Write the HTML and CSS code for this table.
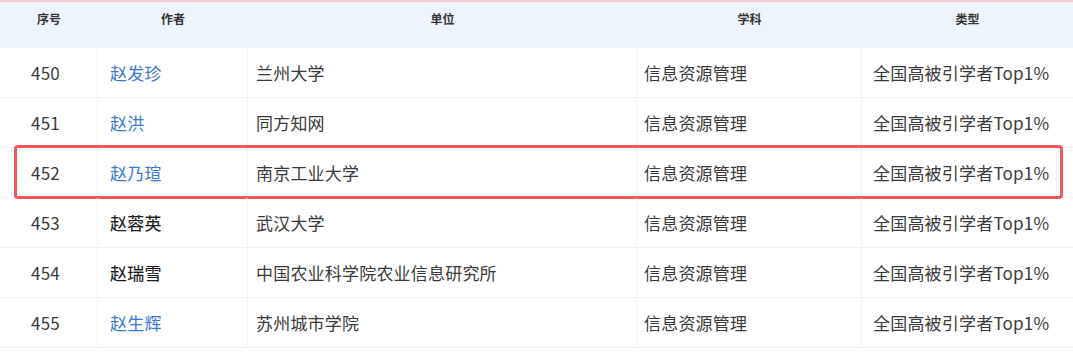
FILE: index.html
```html
<!DOCTYPE html>
<html lang="zh-CN">
<head>
<meta charset="utf-8">
<link rel="stylesheet" href="styles.css">
</head>
<body>
<div class="table">
  <div class="row head">
    <div class="cell">序号</div>
    <div class="cell">作者</div>
    <div class="cell">单位</div>
    <div class="cell">学科</div>
    <div class="cell">类型</div>
  </div>
  <div class="row">
    <div class="cell c0">450</div>
    <div class="cell c1"><span class="link">赵发珍</span></div>
    <div class="cell c2">兰州大学</div>
    <div class="cell c3">信息资源管理</div>
    <div class="cell c4">全国高被引学者Top1%</div>
  </div>
  <div class="row">
    <div class="cell c0">451</div>
    <div class="cell c1"><span class="link">赵洪</span></div>
    <div class="cell c2">同方知网</div>
    <div class="cell c3">信息资源管理</div>
    <div class="cell c4">全国高被引学者Top1%</div>
  </div>
  <div class="row marked">
    <div class="cell c0">452</div>
    <div class="cell c1"><span class="link">赵乃瑄</span></div>
    <div class="cell c2">南京工业大学</div>
    <div class="cell c3">信息资源管理</div>
    <div class="cell c4">全国高被引学者Top1%</div>
  </div>
  <div class="row">
    <div class="cell c0">453</div>
    <div class="cell c1"><span class="name">赵蓉英</span></div>
    <div class="cell c2">武汉大学</div>
    <div class="cell c3">信息资源管理</div>
    <div class="cell c4">全国高被引学者Top1%</div>
  </div>
  <div class="row">
    <div class="cell c0">454</div>
    <div class="cell c1"><span class="name">赵瑞雪</span></div>
    <div class="cell c2">中国农业科学院农业信息研究所</div>
    <div class="cell c3">信息资源管理</div>
    <div class="cell c4">全国高被引学者Top1%</div>
  </div>
  <div class="row">
    <div class="cell c0">455</div>
    <div class="cell c1"><span class="link">赵生辉</span></div>
    <div class="cell c2">苏州城市学院</div>
    <div class="cell c3">信息资源管理</div>
    <div class="cell c4">全国高被引学者Top1%</div>
  </div>
</div>
</body>
</html>
```
FILE: styles.css
```css
html, body {
  margin: 0;
  padding: 0;
  background: #ffffff;
}
body {
  font-family: "Noto Sans CJK SC", "Noto Sans", sans-serif;
  color: #3a3a3a;
  width: 1073px;
  height: 352px;
  overflow: hidden;
}
.table {
  border-top: 2px solid #f1cbd6;
}
.row {
  display: grid;
  grid-template-columns: 98px 150px 389px 225px 211px;
  height: 50px;
  border-bottom: 1px solid #efefef;
  box-sizing: border-box;
  position: relative;
}
.row .cell {
  display: flex;
  align-items: center;
  border-right: 1px solid #f3f3f3;
  font-size: 17px;
  letter-spacing: 0.2px;
  white-space: nowrap;
}
.row .cell:last-child {
  border-right: none;
}
.head {
  height: 46px;
  background: #eef4fc;
  border-bottom: none;
}
.head .cell {
  justify-content: center;
  align-items: flex-start;
  padding-top: 9px;
  font-size: 12px;
  line-height: 16px;
  letter-spacing: 0;
  font-weight: 700;
  color: #333333;
  border-right: none;
}
.c0 { padding-left: 31px; }
.c1 { padding-left: 12px; }
.c2 { padding-left: 8px; }
.c3 { padding-left: 7px; }
.c4 { padding-left: 11px; }
.link {
  color: #3b78d6;
}
.name {
  color: #1a1a1a;
  font-weight: 400;
  -webkit-text-stroke: 0.15px #1a1a1a;
}
.marked::after {
  content: "";
  position: absolute;
  left: 14px;
  right: 10px;
  top: -3px;
  bottom: -2px;
  border: 3px solid #f25757;
  border-radius: 4px;
  pointer-events: none;
}
```
